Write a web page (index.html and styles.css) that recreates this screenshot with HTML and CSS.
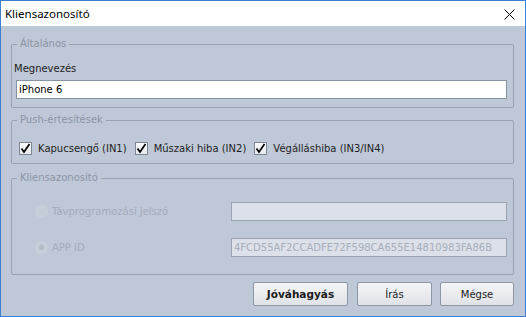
FILE: index.html
```html
<!DOCTYPE html>
<html lang="hu">
<head>
    <meta charset="UTF-8">
    <title>Kliensazonosító</title>
    <link rel="stylesheet" href="styles.css">
</head>
<body>
    <div class="window">
        <div class="titlebar">
            <span class="title">Kliensazonosító</span>
            <svg class="close" width="11" height="11" viewBox="0 0 11 11">
                <path d="M0.5 0.5 L10.5 10.5 M10.5 0.5 L0.5 10.5" stroke="#000" stroke-width="1" fill="none"/>
            </svg>
        </div>

        <div class="content">
            <fieldset class="group group-general">
                <legend>Általános</legend>
                <label class="field-label" for="name">Megnevezés</label>
                <input type="text" id="name" class="text-input wide" value="iPhone 6">
            </fieldset>

            <fieldset class="group group-push">
                <legend>Push-értesítések</legend>
                <div class="check-row">
                    <label class="check">
                        <span class="box"><svg width="11" height="11" viewBox="0 0 11 11"><path d="M1.5 5.5 L4 9 L9.5 1" stroke="#000" stroke-width="1.7" fill="none"/></svg></span>
                        Kapucsengő (IN1)
                    </label>
                    <label class="check">
                        <span class="box"><svg width="11" height="11" viewBox="0 0 11 11"><path d="M1.5 5.5 L4 9 L9.5 1" stroke="#000" stroke-width="1.7" fill="none"/></svg></span>
                        Műszaki hiba (IN2)
                    </label>
                    <label class="check">
                        <span class="box"><svg width="11" height="11" viewBox="0 0 11 11"><path d="M1.5 5.5 L4 9 L9.5 1" stroke="#000" stroke-width="1.7" fill="none"/></svg></span>
                        Végálláshiba (IN3/IN4)
                    </label>
                </div>
            </fieldset>

            <fieldset class="group group-client" disabled>
                <legend>Kliensazonosító</legend>
                <div class="radio-row first">
                    <label class="radio"><span class="dot"></span>Távprogramozási jelszó</label>
                    <input type="text" class="text-input off">
                </div>
                <div class="radio-row second">
                    <label class="radio"><span class="dot checked"></span>APP ID</label>
                    <input type="text" class="text-input off" value="4FCD55AF2CCADFE72F598CA655E14810983FA86B">
                </div>
            </fieldset>

            <div class="buttons">
                <button class="btn primary">Jóváhagyás</button>
                <button class="btn">Írás</button>
                <button class="btn">Mégse</button>
            </div>
        </div>
    </div>
</body>
</html>
```

FILE: styles.css
```css
body { margin: 0; font-family: "DejaVu Sans", sans-serif; font-size: 10px; color: #1e1e1e; }
.window { width: 526px; height: 317px; box-sizing: border-box; border: 1px solid #3b80d3; display: flex; flex-direction: column; }
.titlebar { height: 25px; background: #fff; display: flex; align-items: center; justify-content: space-between; padding: 0 10px 0 4px; }
.title { font-family: "Noto Sans", sans-serif; font-size: 11.5px; color: #000; }
.close { margin-top: 1px; }
.content { flex: 1; background: #bec8d7; padding: 0 11px 0 10px; }

.group { margin: 0; padding: 0 2px; border: 1px solid #98a2b1; border-radius: 2px; }
.group legend { margin-left: 3px; padding: 0 3px; line-height: 12px; color: #8c96a5; }
.group-general { margin-top: 12px; padding-bottom: 8px; }
.group-push { margin-top: 6px; padding-bottom: 8px; }
.group-client { margin-top: 8px; padding-bottom: 17px; }

.field-label { display: block; margin-top: 12px; line-height: 13px; }
.text-input { display: block; box-sizing: border-box; height: 19px; margin: 0; padding: 0 2px; border: 1px solid #8893a3; background: #fff; font-family: "DejaVu Sans", sans-serif; font-size: 10px; color: #000; }
.wide { width: 491px; margin: 5px 0 0 2px; }

.check-row { display: flex; margin-top: 16px; margin-left: 5px; height: 13px; }
.check { display: flex; align-items: center; margin-right: 8px; line-height: 13px; }
.box { width: 11px; height: 11px; border: 1px solid #7d8694; background: linear-gradient(#fbfbfb, #e6e9ee); margin-right: 6px; display: flex; }

.radio-row { display: grid; grid-template-columns: 217px 276px; align-items: center; }
.radio-row.first { margin-top: 18px; }
.radio-row.second { margin-top: 17px; }
.radio { display: flex; align-items: center; margin-left: 21px; color: #a3acb9; }
.dot { width: 11px; height: 11px; border: 1px solid #cad1db; border-radius: 50%; background: #c5cdd9; margin-right: 4px; display: flex; align-items: center; justify-content: center; }
.dot.checked::after { content: ""; width: 5px; height: 5px; border-radius: 50%; background: #b2bac6; }
.text-input.off { background: #dce0e8; border-color: #9aa3b1; color: #a7afbb; width: 276px; }

.buttons { display: flex; justify-content: flex-end; margin-top: 7px; padding-right: 0; }
.btn { height: 24px; margin-left: 9px; border: 1px solid #8c96a5; border-radius: 2px; background: linear-gradient(#f4f5f7, #dfe2e7); font-family: "DejaVu Sans", sans-serif; font-size: 10px; color: #222; padding: 0; }
.btn.primary { width: 95px; font-weight: bold; font-size: 10.5px; color: #1a1a1a; }
.btn:nth-child(2) { width: 75px; }
.btn:nth-child(3) { width: 74px; margin-left: 8px; }
```
